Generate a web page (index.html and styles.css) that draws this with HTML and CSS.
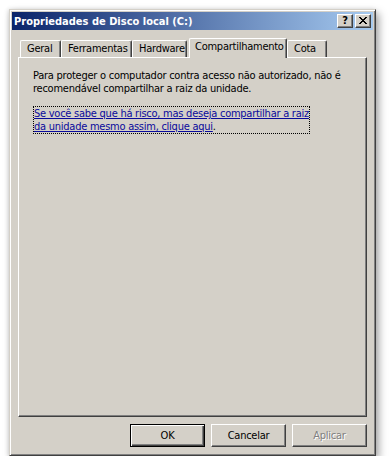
FILE: index.html
```html
<!DOCTYPE html>
<html lang="pt">
<head>
    <meta charset="UTF-8">
    <meta name="viewport" content="width=device-width, initial-scale=1.0">
    <title>Propriedades de Disco local (C:)</title>
    <link rel="stylesheet" href="styles.css">
</head>
<body>
    <div class="window">
        <!-- Barra de titulo -->
        <div class="titlebar">
            <span class="title">Propriedades de Disco local (C:)</span>
            <div class="caption-buttons">
                <span class="cap-btn">?</span>
                <span class="cap-btn cap-close">
                    <svg width="8" height="7" viewBox="0 0 8 7">
                        <path d="M0 0h2v1h1v1h2V1h1V0h2v1H7v1H6v1H5v1h1v1h1v1h1v1H6V6H5V5H3v1H2v1H0V6h1V5h1V4h1V3H2V2H1V1H0z" fill="#000"/>
                    </svg>
                </span>
            </div>
        </div>

        <!-- Schede -->
        <div class="tabs">
            <div class="tab tab-geral">Geral</div>
            <div class="tab tab-ferr">Ferramentas</div>
            <div class="tab tab-hard">Hardware</div>
            <div class="tab tab-comp selected">Compartilhamento</div>
            <div class="tab tab-cota">Cota</div>
        </div>

        <div class="panel">
            <p class="info">Para proteger o computador contra acesso não autorizado, não é<br>recomendável compartilhar a raiz da unidade.</p>
            <div class="link-box">
                <a href="#" class="link">Se você sabe que há risco, mas deseja compartilhar a raiz<br>da unidade mesmo assim, clique aqui</a>.
            </div>
        </div>

        <!-- Pulsanti -->
        <div class="buttons">
            <button class="btn default">OK</button>
            <button class="btn">Cancelar</button>
            <button class="btn disabled">Aplicar</button>
        </div>
    </div>
</body>
</html>
```

FILE: styles.css
```css
:root {
    --face: #d4d0c8;
    --light: #ffffff;
    --shadow: #808080;
    --dark: #404040;
    --font: "DejaVu Sans Condensed", "DejaVu Sans", sans-serif;
}

* {
    margin: 0;
    padding: 0;
    box-sizing: border-box;
}

body {
    background: #ffffff;
    font-family: var(--font);
    font-stretch: condensed;
    font-size: 11px;
    letter-spacing: -0.25px;
    color: #000;
}

/* Finestra */
.window {
    margin: 9px 0 0 9px;
    width: 367px;
    height: 447px;
    background: var(--face);
    border: 1px solid;
    border-color: var(--face) var(--dark) var(--dark) var(--face);
    box-shadow: inset 1px 1px 0 var(--light), inset -1px -1px 0 var(--shadow),
                3px 4px 8px rgba(0, 0, 0, 0.35), -1px 0 4px rgba(0, 0, 0, 0.12);
    padding: 2px;
    display: flex;
    flex-direction: column;
}

.titlebar {
    height: 18px;
    background: linear-gradient(to right, #0a246a, #a6caf0);
    display: flex;
    align-items: center;
    justify-content: space-between;
    padding: 0 2px 0 2px;
}

.title {
    color: #fff;
    font-weight: bold;
    font-size: 11px;
    letter-spacing: 0;
}

.caption-buttons {
    display: flex;
    gap: 1px;
}

.cap-btn {
    width: 16px;
    height: 14px;
    background: var(--face);
    border: 1px solid;
    border-color: var(--light) var(--dark) var(--dark) var(--light);
    box-shadow: inset -1px -1px 0 var(--shadow);
    display: flex;
    align-items: center;
    justify-content: center;
    font-weight: bold;
    font-size: 11px;
    line-height: 1;
    padding-bottom: 1px;
}

.cap-close {
    margin-left: 1px;
    padding: 0 1px 1px 0;
}

/* Schede */
.tabs {
    display: flex;
    align-items: flex-end;
    height: 19px;
    margin: 8px 0 0 8px;
}

.tab {
    height: 17px;
    background: var(--face);
    border-top: 1px solid var(--light);
    border-left: 1px solid var(--light);
    border-right: 1px solid var(--dark);
    box-shadow: inset -1px 0 0 var(--shadow);
    border-radius: 2px 2px 0 0;
    padding: 1px 0 0 6px;
    white-space: nowrap;
    overflow: hidden;
}

.tab-geral { width: 41px; }
.tab-ferr { width: 71px; }
.tab-hard { width: 55px; }
.tab-cota { width: 40px; }

.tab.selected {
    position: relative;
    z-index: 1;
    width: 98px;
    height: 20px;
    margin: 0 0 -1px 2px;
    padding: 1px 0 0 5px;
}

.panel {
    margin: 0 6px 0 6px;
    height: 360px;
    border: 1px solid;
    border-color: var(--light) var(--dark) var(--dark) var(--light);
    box-shadow: inset -1px -1px 0 var(--shadow);
    padding: 11px 0 0 14px;
}

.info {
    line-height: 13px;
    white-space: nowrap;
}

.link-box {
    margin-top: 11px;
    width: 277px;
    border: 1px dotted #000;
    line-height: 13px;
    white-space: nowrap;
}

.link {
    color: #0a0a9c;
    text-decoration: underline;
}

/* Pulsanti */
.buttons {
    display: flex;
    justify-content: flex-end;
    gap: 6px;
    margin: 7px 6px 0 0;
}

.btn {
    width: 75px;
    height: 23px;
    background: var(--face);
    font-family: var(--font);
    font-stretch: condensed;
    font-size: 11px;
    letter-spacing: -0.25px;
    color: #000;
    border: 1px solid;
    border-color: var(--light) var(--dark) var(--dark) var(--light);
    box-shadow: inset -1px -1px 0 var(--shadow);
}

.btn.default {
    border: 1px solid #000;
    box-shadow: inset 1px 1px 0 var(--light), inset -1px -1px 0 var(--dark), inset -2px -2px 0 var(--shadow);
}

.btn.disabled {
    color: var(--shadow);
    text-shadow: 1px 1px 0 var(--light);
}
```
